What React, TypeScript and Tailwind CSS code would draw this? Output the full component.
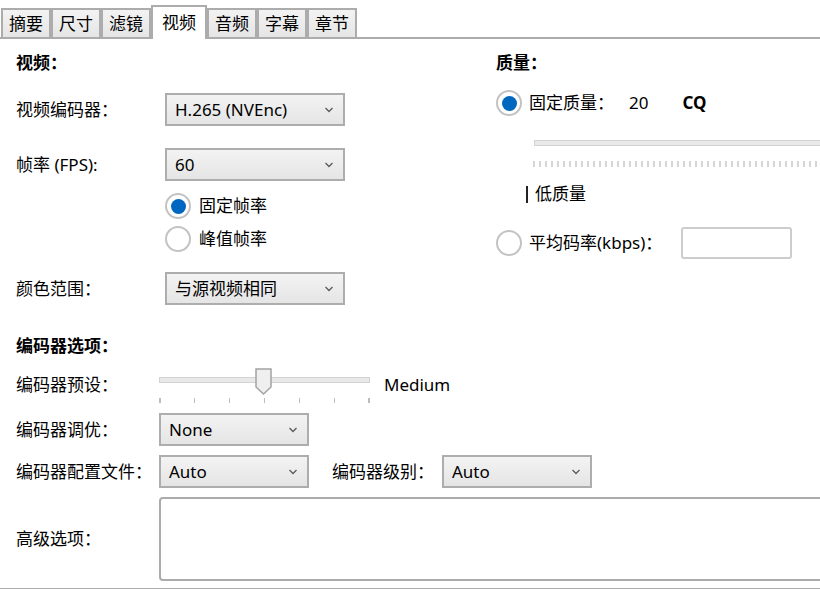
import React from 'react';

const tabs = ['摘要', '尺寸', '滤镜', '视频', '音频', '字幕', '章节'];

const Chevron = () => (
  <svg width="10" height="6" viewBox="0 0 10 6" className="shrink-0">
    <path d="M1.5 1l3.5 3.5L8.5 1" fill="none" stroke="#5a5a5a" strokeWidth="1.3" />
  </svg>
);

const Select: React.FC<{ value: string; width: string }> = ({ value, width }) => (
  <div
    className={`${width} h-[33px] shrink-0 border-2 border-[#adadad] bg-gradient-to-b from-[#f3f3f3] to-[#e5e5e5] flex items-center justify-between pl-[8px] pr-[9px]`}
  >
    <span>{value}</span>
    <Chevron />
  </div>
);

const Radio: React.FC<{ checked?: boolean }> = ({ checked }) => (
  <div className="w-[26px] h-[26px] rounded-full border-2 border-[#c3c3c3] bg-white flex items-center justify-center shrink-0">
    {checked && <div className="w-[15px] h-[15px] rounded-full bg-[#0067c0]" />}
  </div>
);

const Track = ({ className }: { className: string }) => (
  <div className={`${className} h-[6px] shrink-0 bg-[#e9e9e9] border border-[#d3d3d3]`} />
);

export default function App() {
  return (
    <div className="w-[820px] h-[589px] overflow-hidden bg-white text-black text-[17px] leading-[24px] font-['Noto_Sans','Noto_Sans_CJK_SC',sans-serif]">
      {/* tab strip */}
      <div className="h-[39px] flex items-end border-b-2 border-[#acacac] pl-[1px]">
        {tabs.map((t) =>
          t === '视频' ? (
            <div
              key={t}
              className="h-[34px] -mb-[2px] px-[9px] border-2 border-b-0 border-[#acacac] bg-white flex items-center relative z-10"
            >
              {t}
            </div>
          ) : (
            <div
              key={t}
              className="h-[29px] px-[6px] border-2 border-b-0 border-[#acacac] bg-gradient-to-b from-[#f3f3f3] to-[#e5e5e5] flex items-center"
            >
              {t}
            </div>
          )
        )}
      </div>

      <div className="flex">
        {/* left column */}
        <div className="w-[480px] shrink-0 pl-4">
          <div className="mt-[12px] h-[24px] font-bold">视频：</div>
          <div className="mt-[18px] h-[33px] flex items-center">
            <div className="w-[149px] shrink-0">视频编码器：</div>
            <Select value="H.265 (NVEnc)" width="w-[180px]" />
          </div>
          <div className="mt-[22px] h-[33px] flex items-center">
            <div className="w-[149px] shrink-0">帧率 (FPS):</div>
            <Select value="60" width="w-[180px]" />
          </div>
          <div className="mt-[12px] h-[26px] flex items-center gap-[8px] pl-[149px]">
            <Radio checked />
            <span>固定帧率</span>
          </div>
          <div className="mt-[7px] h-[26px] flex items-center gap-[8px] pl-[149px]">
            <Radio />
            <span>峰值帧率</span>
          </div>
          <div className="mt-[20px] h-[33px] flex items-center">
            <div className="w-[149px] shrink-0">颜色范围：</div>
            <Select value="与源视频相同" width="w-[180px]" />
          </div>
          <div className="mt-[29px] h-[24px] font-bold">编码器选项：</div>
        </div>

        {/* right column */}
        <div className="flex-1 min-w-0 pl-4">
          <div className="mt-[12px] h-[24px] font-bold">质量：</div>
          <div className="mt-[15px] h-[26px] flex items-center">
            <Radio checked />
            <span className="ml-[7px] w-[100px] shrink-0">固定质量：</span>
            <span>20</span>
            <span className="ml-[34px] font-bold">CQ</span>
          </div>
          <Track className="mt-[24px] ml-[38px] w-[320px]" />
          <div className="mt-[15px] ml-[37px] w-[320px] h-[6px] bg-[repeating-linear-gradient(90deg,#d6d6d6_0px,#d6d6d6_2px,transparent_2px,transparent_6px)]" />
          <div className="mt-[15px] ml-[30px] h-[24px] flex items-center">
            <span className="w-[2px] h-[17px] bg-[#222]" />
            <span className="ml-[7px]">低质量</span>
          </div>
          <div className="mt-[24px] h-[26px] flex items-center">
            <Radio />
            <span className="ml-[7px] w-[152px] shrink-0">平均码率(kbps)：</span>
            <div className="w-[111px] h-[32px] shrink-0 rounded-[3px] border-2 border-[#cdcdcd] bg-white" />
          </div>
        </div>
      </div>

      {/* encoder options */}
      <div className="pl-4">
        <div className="mt-[10px] h-[36px] flex items-start">
          <div className="w-[143px] shrink-0 mt-[5px]">编码器预设：</div>
          <div className="w-[211px] h-[36px] shrink-0 relative">
            <Track className="mt-[9px] w-full" />
            <div className="mt-[15px] flex justify-between">
              {Array.from({ length: 7 }).map((_, i) => (
                <div key={i} className="w-[1.5px] h-[5px] bg-[#bdbdbd]" />
              ))}
            </div>
            <svg width="17" height="27" viewBox="0 0 17 27" className="absolute left-[96px] top-0">
              <path d="M1 1H16V19L8.5 26L1 19Z" fill="#efefef" stroke="#a3a3a3" strokeWidth="1.5" />
            </svg>
          </div>
          <div className="ml-[14px] mt-[5px]">Medium</div>
        </div>

        <div className="mt-[9px] h-[33px] flex items-center">
          <div className="w-[143px] shrink-0">编码器调优：</div>
          <Select value="None" width="w-[150px]" />
        </div>

        <div className="mt-[9px] h-[33px] flex items-center">
          <div className="w-[143px] shrink-0">编码器配置文件：</div>
          <Select value="Auto" width="w-[150px]" />
          <div className="ml-[23px] w-[110px] shrink-0">编码器级别：</div>
          <Select value="Auto" width="w-[150px]" />
        </div>

        <div className="mt-[9px] h-[84px] flex items-center">
          <div className="w-[143px] shrink-0">高级选项：</div>
          <div className="w-[700px] h-[84px] shrink-0 rounded-[4px] border-2 border-[#ababab] bg-white" />
        </div>
      </div>
      <div className="mt-[7px] h-[2px] bg-[#acacac]" />
    </div>
  );
}
